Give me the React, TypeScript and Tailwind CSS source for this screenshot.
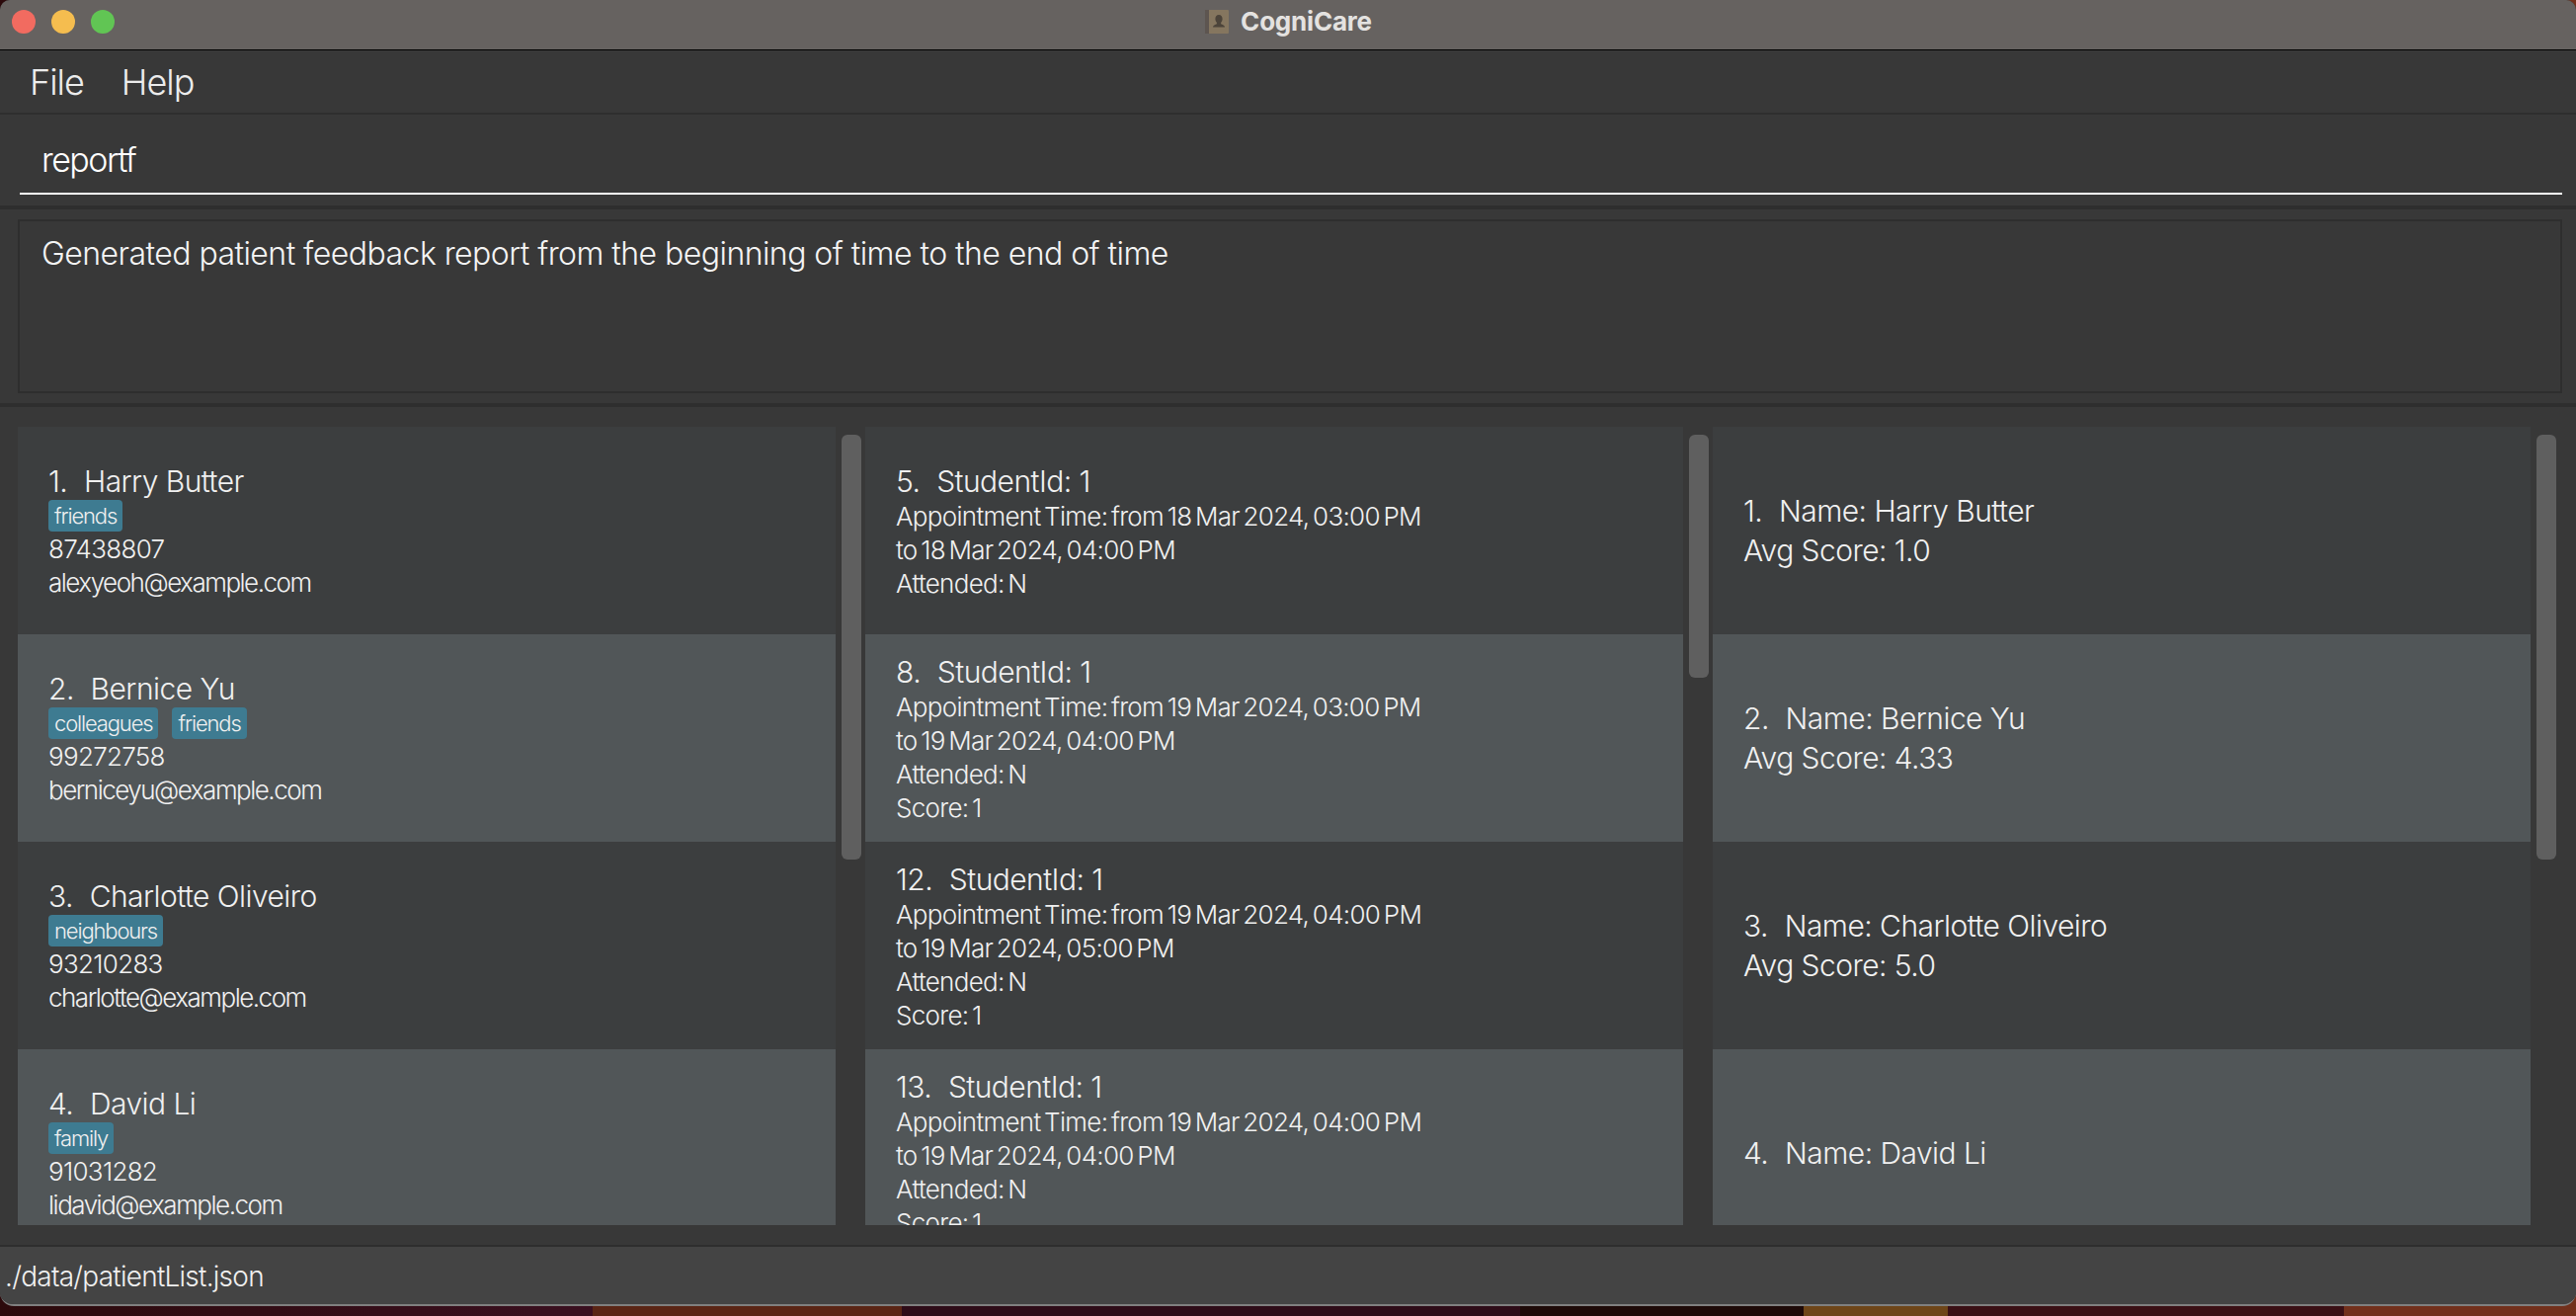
const patients = [
  { id: 1, name: "Harry Butter", tags: ["friends"], phone: "87438807", email: "alexyeoh@example.com" },
  { id: 2, name: "Bernice Yu", tags: ["colleagues", "friends"], phone: "99272758", email: "berniceyu@example.com" },
  { id: 3, name: "Charlotte Oliveiro", tags: ["neighbours"], phone: "93210283", email: "charlotte@example.com" },
  { id: 4, name: "David Li", tags: ["family"], phone: "91031282", email: "lidavid@example.com" },
];

const appointments = [
  { id: 5, from: "18 Mar 2024, 03:00 PM", to: "18 Mar 2024, 04:00 PM", score: "" },
  { id: 8, from: "19 Mar 2024, 03:00 PM", to: "19 Mar 2024, 04:00 PM", score: "1" },
  { id: 12, from: "19 Mar 2024, 04:00 PM", to: "19 Mar 2024, 05:00 PM", score: "1" },
  { id: 13, from: "19 Mar 2024, 04:00 PM", to: "19 Mar 2024, 04:00 PM", score: "1" },
];

const feedback = [
  { id: 1, name: "Harry Butter", avg: "1.0" },
  { id: 2, name: "Bernice Yu", avg: "4.33" },
  { id: 3, name: "Charlotte Oliveiro", avg: "5.0" },
  { id: 4, name: "David Li", avg: "" },
];

function rowColor(i: number) {
  return i % 2 === 0 ? "bg-[#3c3e3f]" : "bg-[#515658]";
}

const detail = "text-[26px] leading-[34px] tracking-[-0.7px] [word-spacing:-3px] font-[350] text-[#f0f0f0]";
const title = "text-[30px] tracking-[-0.55px] font-[350] text-[#f0f0f0]";

function ListColumn({ thumb, children }: { thumb: string; children: React.ReactNode }) {
  return (
    <div className="flex h-full w-[858px] shrink-0">
      <div className="h-full w-[828px] shrink-0 overflow-hidden">{children}</div>
      <div className="flex-1 pl-[6px] pt-2">
        <div className={`w-[20px] rounded-[6px] bg-[#5f5f5f] ${thumb}`} />
      </div>
    </div>
  );
}

function PatientRow({ p, i }: { p: (typeof patients)[number]; i: number }) {
  return (
    <div className={`flex h-[210px] flex-col justify-center pl-[31px] ${rowColor(i)}`}>
      <div className={`${title} leading-[38px]`}>
        <span className="mr-[1px]">{p.id}.&nbsp; </span>
        {p.name}
      </div>
      <div className="flex gap-[14px] pb-[1px]">
        {p.tags.map((t) => (
          <span key={t} className="rounded-[4px] bg-[#3e7b91] px-[6px] text-[22px] font-[350] leading-[32px] tracking-[-1.15px] text-[#f0f0f0]">
            {t}
          </span>
        ))}
      </div>
      <div className={detail}>{p.phone}</div>
      <div className="text-[26px] font-[350] leading-[34px] tracking-[-1.5px] text-[#f0f0f0]">{p.email}</div>
    </div>
  );
}

function AppointmentRow({ a, i }: { a: (typeof appointments)[number]; i: number }) {
  return (
    <div className={`flex h-[210px] flex-col justify-center pl-[31px] pt-[2px] ${rowColor(i)}`}>
      <div className={`${title} leading-[38px]`}>
        <span className="mr-[1px]">{a.id}.&nbsp; </span>
        StudentId: 1
      </div>
      <div className={detail}>Appointment Time: from {a.from}</div>
      <div className={detail}>to {a.to}</div>
      <div className={detail}>Attended: N</div>
      {a.score && <div className={detail}>Score: {a.score}</div>}
    </div>
  );
}

function FeedbackRow({ f, i }: { f: (typeof feedback)[number]; i: number }) {
  return (
    <div className={`flex h-[210px] flex-col justify-center pl-[31px] ${rowColor(i)}`}>
      <div className={`${title} leading-[40px]`}>
        <span className="mr-[1px]">{f.id}.&nbsp; </span>
        Name: {f.name}
      </div>
      {f.avg && <div className={`${title} leading-[40px]`}>Avg Score: {f.avg}</div>}
    </div>
  );
}

export default function App() {
  return (
    <div className="h-[1332px] w-[2608px] overflow-hidden bg-[linear-gradient(90deg,#2c0a0c_0%,#3a1020_23%,#5a2515_23%,#5a2515_35%,#2e0c18_35%,#2e0c18_59%,#1e0a08_59%,#1e0a08_70%,#6e4518_70%,#6e4518_75.6%,#3a1015_75.6%,#3a1015_91%,#72301c_91%)] font-['Inter','Liberation_Sans',sans-serif]">
      <div className="flex h-[1322px] flex-col overflow-hidden rounded-b-[14px] rounded-t-[10px] border-b-2 border-[#808080] bg-[#383838]">
        {/* title bar */}
        <div className="flex h-[51px] shrink-0 items-center border-b border-black bg-[#666260] pb-[7px] pl-[12px]">
          <div className="flex w-[104px] gap-[16px]">
            <span className="h-[24px] w-[24px] rounded-full bg-[#f26b60]" />
            <span className="h-[24px] w-[24px] rounded-full bg-[#f5bd4f]" />
            <span className="h-[24px] w-[24px] rounded-full bg-[#61c554]" />
          </div>
          <div className="flex flex-1 items-center justify-center gap-[11px] pr-[116px]">
            <svg width="26" height="26" viewBox="0 0 26 26">
              <rect x="1" y="1" width="24" height="24" rx="1" fill="#85765f" />
              <rect x="1" y="1" width="4" height="24" fill="#5d5550" />
              <path d="M15 6c2.4 0 3.6 2 3.6 4.2 0 1.5-.7 2.8-1.5 3.6v1.4c1.6.8 3.9 1.4 3.9 3.3H9c0-1.9 2.3-2.5 3.9-3.3v-1.4c-.8-.8-1.5-2.1-1.5-3.6C11.4 8 12.6 6 15 6z" fill="#4c443a" />
            </svg>
            <span className="text-[26px] font-bold tracking-[-0.2px] text-[#e4e2e0]">CogniCare</span>
          </div>
        </div>

        {/* menu */}
        <div className="flex h-[65px] shrink-0 items-center gap-[38px] border-b-2 border-[#2e2e2e] pl-[30px] text-[36px] font-[350] tracking-[-1px] text-[#ececec]">
          <span>File</span>
          <span>Help</span>
        </div>

        {/* command box */}
        <div className="h-[96px] shrink-0 border-b-4 border-[#2e2e2e] pl-[20px] pr-[14px] pt-[14px]">
          <div className="h-[67px] border-b-2 border-white pl-[22px] pt-[2px] text-[34px] font-[350] leading-[60px] tracking-[-1.5px] text-white">
            reportf
          </div>
        </div>

        {/* result display */}
        <div className="h-[200px] shrink-0 border-b-4 border-[#2e2e2e] pl-[18px] pr-[14px] pt-[10px]">
          <div className="h-[176px] border-2 border-[#2e2e2e] pl-[22px] pt-[13px] text-[32px] font-[350] leading-[40px] tracking-[-0.55px] text-[#f4f4f4]">
            Generated patient feedback report from the beginning of time to the end of time
          </div>
        </div>

        {/* lists */}
        <div className="min-h-0 flex-1 px-[18px] py-[20px]">
          <div className="flex h-full">
            <ListColumn thumb="h-[430px]">
              {patients.map((p, i) => (
                <PatientRow key={p.id} p={p} i={i} />
              ))}
            </ListColumn>
            <ListColumn thumb="h-[246px]">
              {appointments.map((a, i) => (
                <AppointmentRow key={a.id} a={a} i={i} />
              ))}
            </ListColumn>
            <ListColumn thumb="h-[430px]">
              {feedback.map((f, i) => (
                <FeedbackRow key={f.id} f={f} i={i} />
              ))}
            </ListColumn>
          </div>
        </div>

        {/* status bar */}
        <div className="flex h-[60px] shrink-0 items-start border-t-2 border-[#2e2e2e] bg-[#444444] pl-[5px] pt-[12px] text-[28px] font-[350] leading-[36px] tracking-[-0.75px] text-[#f0f0f0]">
          ./data/patientList.json
        </div>
      </div>
    </div>
  );
}
